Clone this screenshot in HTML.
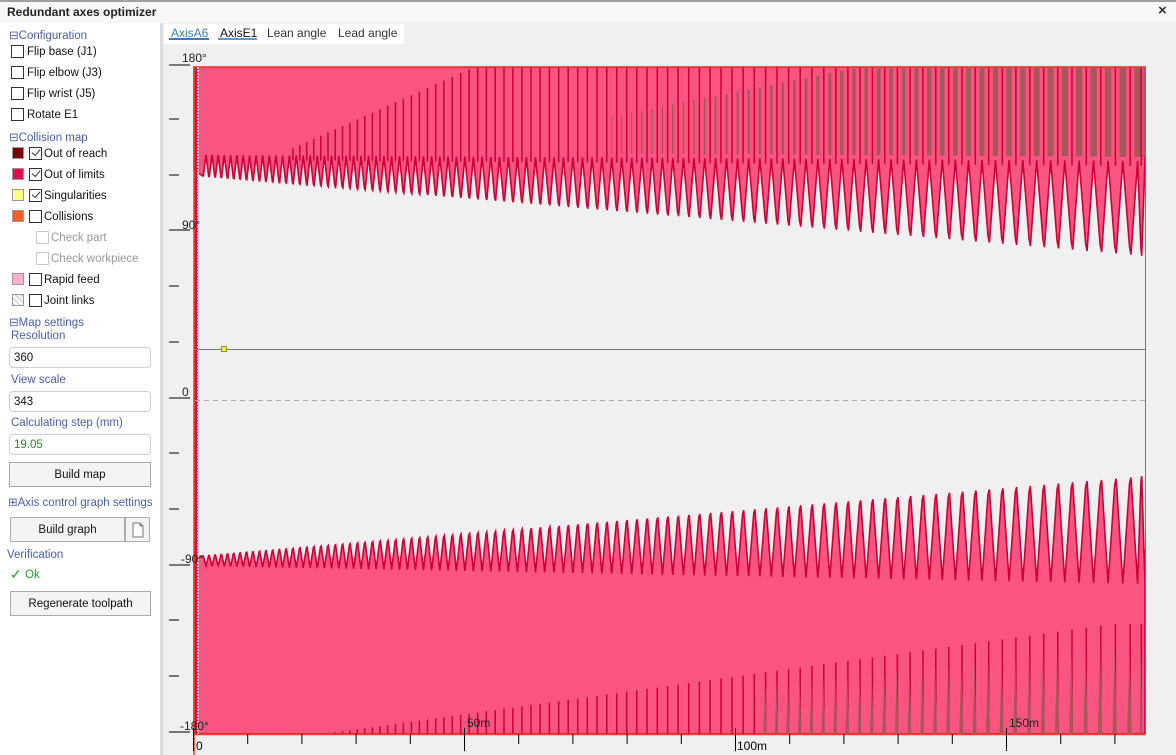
<!DOCTYPE html>
<html><head><meta charset="utf-8"><style>
*{margin:0;padding:0;box-sizing:border-box}
body{width:1176px;height:755px;overflow:hidden;background:#f0f0f0;font-family:"Liberation Sans",sans-serif;font-size:11.5px;color:#111;position:relative}
.a{position:absolute;white-space:nowrap}
.hdr{color:#4a5ea8}
.cb{position:absolute;width:13px;height:13px;border:1px solid #333;background:#fff}
.cb.g{border-color:#c8c8c8}
.sw{position:absolute;width:12px;height:12px;border:1px solid #999}
.inp{position:absolute;left:9px;width:142px;height:21px;border:1px solid #cfcfcf;border-radius:4px;background:#fff;padding:4px 0 0 4px}
.btn{position:absolute;border:1px solid #aaa;background:#f4f4f4;text-align:center;padding-top:6px}
.chk{position:absolute;left:2px;top:1px;width:8px;height:5px;border-left:1px solid #333;border-bottom:1px solid #333;transform:rotate(-50deg)}
</style></head><body>
<div class="a" style="left:0;top:0;width:1176px;height:23px;background:#f7f7f7;border-top:2px solid #a0a0a0"></div>
<div class="a" style="left:7px;top:5px;font-weight:bold;font-size:12px;color:#222">Redundant axes optimizer</div>
<div class="a" style="left:1158px;top:2px;font-size:15px;font-weight:bold;color:#333">×</div>
<div class="a" style="left:0;top:23px;width:160px;height:732px;background:#fff"></div>
<div class="a" style="left:160px;top:23px;width:3px;height:732px;background:#dcdcdc"></div>

<div class="a hdr" style="left:9px;top:28px">⊟Configuration</div>
<div class="cb" style="left:11px;top:45px"></div><div class="a" style="left:27px;top:46px">Flip base (J1)</div>
<div class="cb" style="left:11px;top:66px"></div><div class="a" style="left:27px;top:67px">Flip elbow (J3)</div>
<div class="cb" style="left:11px;top:87px"></div><div class="a" style="left:27px;top:88px">Flip wrist (J5)</div>
<div class="cb" style="left:11px;top:108px"></div><div class="a" style="left:27px;top:109px">Rotate E1</div>
<div class="a hdr" style="left:9px;top:130px">⊟Collision map</div>
<div class="sw" style="left:12px;top:147px;background:#7a0000"></div><div class="cb" style="left:29px;top:147px"><div class="chk"></div></div><div class="a" style="left:44px;top:148px">Out of reach</div>
<div class="sw" style="left:12px;top:168px;background:#e0104a"></div><div class="cb" style="left:29px;top:168px"><div class="chk"></div></div><div class="a" style="left:44px;top:169px">Out of limits</div>
<div class="sw" style="left:12px;top:189px;background:#ffff80"></div><div class="cb" style="left:29px;top:189px"><div class="chk"></div></div><div class="a" style="left:44px;top:190px">Singularities</div>
<div class="sw" style="left:12px;top:210px;background:#ff5a2a"></div><div class="cb" style="left:29px;top:210px"></div><div class="a" style="left:44px;top:211px">Collisions</div>
<div class="cb g" style="left:36px;top:231px"></div><div class="a" style="left:51px;top:232px;color:#999">Check part</div>
<div class="cb g" style="left:36px;top:252px"></div><div class="a" style="left:51px;top:253px;color:#999">Check workpiece</div>
<div class="sw" style="left:12px;top:273px;background:#ffb0c8"></div><div class="cb" style="left:29px;top:273px"></div><div class="a" style="left:44px;top:274px">Rapid feed</div>
<div class="sw" style="left:12px;top:294px;background:repeating-linear-gradient(45deg,#ddd 0 2px,#fff 2px 4px)"></div><div class="cb" style="left:29px;top:294px"></div><div class="a" style="left:44px;top:295px">Joint links</div>
<div class="a hdr" style="left:9px;top:315px">⊟Map settings</div>
<div class="a hdr" style="left:11px;top:330px">Resolution</div>
<div class="inp" style="top:347px">360</div>
<div class="a hdr" style="left:11px;top:374px">View scale</div>
<div class="inp" style="top:391px">343</div>
<div class="a hdr" style="left:11px;top:417px">Calculating step (mm)</div>
<div class="inp" style="top:434px;color:#2a8a2a">19.05</div>
<div class="btn" style="left:9px;top:462px;width:142px;height:25px">Build map</div>
<div class="a hdr" style="left:8px;top:495px">⊞Axis control graph settings</div>
<div class="btn" style="left:10px;top:517px;width:115px;height:25px">Build graph</div>
<div class="btn" style="left:125px;top:517px;width:25px;height:25px;padding-top:4px"><svg width="12" height="16"><path d="M1 1H8L11 4V15H1Z M8 1V4H11" fill="#fff" stroke="#777"/></svg></div>
<div class="a hdr" style="left:7px;top:549px">Verification</div>
<div class="a" style="left:10px;top:566px;color:#2a9a2a;font-size:14px">✓</div><div class="a" style="left:25px;top:569px;color:#2a9a2a">Ok</div>
<div class="btn" style="left:10px;top:591px;width:141px;height:25px">Regenerate toolpath</div>

<div class="a" style="left:164px;top:24px;width:240px;height:20px;background:#fff"></div>
<div class="a" style="left:171px;top:26px;font-size:12px;color:#3a7ac0">AxisA6</div>
<div class="a" style="left:169px;top:38px;width:40px;height:2px;background:#3a7ac0"></div>
<div class="a" style="left:220px;top:26px;font-size:12px">AxisE1</div>
<div class="a" style="left:218px;top:38px;width:39px;height:2px;background:#5a9ad0"></div>
<div class="a" style="left:267px;top:26px;font-size:12px;color:#333">Lean angle</div>
<div class="a" style="left:338px;top:26px;font-size:12px;color:#333">Lead angle</div>

<svg id="ch" class="a" style="left:0;top:0" width="1176" height="755"></svg>
<script>
(function(){
var s='';
var P='#fa5580',R='#cc0033',B='#a8565a';
var tpa='M194 67L1145 67L1145 160',bta='M194 734L1145 734L1145 550';
var xs=[];var x=200;while(x<1140){xs.push(x);x+=6+9*(x-200)/940;}
var tp='',bp='',dk='',br='',bs='',bsr='';
for(var i=xs.length-1;i>=0;i--){var x0=xs[i],p=(i+1<xs.length?xs[i+1]:1145)-x0,f=(x0-200)/940;
 var yb=155+6*f,yt=176+80*f;
 tp+='L'+(x0+p).toFixed(1)+' '+yb.toFixed(1)+'L'+(x0+0.55*p).toFixed(1)+' '+yt.toFixed(1)+'L'+(x0+0.45*p).toFixed(1)+' '+(yt-8*f).toFixed(1);
 var byb=566+18*f,byt=556-80*f;
 bp+='L'+(x0+p).toFixed(1)+' '+byb.toFixed(1)+'L'+(x0+0.55*p).toFixed(1)+' '+byt.toFixed(1)+'L'+(x0+0.45*p).toFixed(1)+' '+(byt+6*f).toFixed(1);
 if(x0>285){var ys=x0>470?67:67+(470-x0)*0.45;dk+='M'+(x0+0.5*p).toFixed(1)+' '+ys.toFixed(1)+'V'+(yb+5).toFixed(1);}
 if(x0>600){var w=Math.min(0.45,0.1+(x0-600)/1300)*p;var y0=x0>850?67:67+(850-x0)*0.2;br+='<rect x="'+(x0+p-w/2).toFixed(1)+'" y="'+y0.toFixed(1)+'" width="'+w.toFixed(1)+'" height="'+(yb-y0-4).toFixed(1)+'" fill="'+B+'"/>';}
 if(x0>320){var h=Math.min(110,(x0-320)*0.14);var c=x0+0.5*p;
   bsr+='M'+c.toFixed(1)+' 734V'+(734-h).toFixed(1);
   if(x0>750){var hb=h*0.8;bs+='M'+(c-0.2*p).toFixed(1)+' 734L'+(c-0.05*p).toFixed(1)+' '+(734-hb).toFixed(1)+'L'+(c+0.1*p).toFixed(1)+' 734Z';}}
}
s+='<path d="'+tpa+tp+'L194 170Z" fill="'+P+'" stroke="'+R+'" stroke-width="1.6"/>';
s+='<path d="'+bta+bp+'L194 560Z" fill="'+P+'" stroke="'+R+'" stroke-width="1.6"/>';
s+=br;
s+='<path d="'+dk+'" stroke="'+R+'" stroke-width="1.5" fill="none"/>';
s+='<path d="'+bsr+'" stroke="'+R+'" stroke-width="1.5" fill="none"/>';
s+='<path d="'+bs+'" fill="'+B+'"/>';
s+='<rect x="194" y="67" width="4" height="667" fill="#d8104a"/>';
s+='<rect x="1146" y="60" width="30" height="680" fill="#f0f0f0"/>';
s+='<line x1="1145.5" y1="67" x2="1145.5" y2="734" stroke="#777"/>';
s+='<line x1="194" y1="67" x2="1145" y2="67" stroke="#ff4010"/><line x1="194" y1="734.5" x2="1145" y2="734.5" stroke="#ff4010" stroke-width="1.5"/>';
s+='<line x1="194" y1="67" x2="194" y2="755" stroke="#ff4010" stroke-width="1.5"/>';
s+='<line x1="198" y1="67" x2="198" y2="734" stroke="#ccc" stroke-width="2" stroke-dasharray="2 1"/>';
s+='<line x1="195" y1="349.5" x2="1145" y2="349.5" stroke="#777"/>';
s+='<line x1="195" y1="400.5" x2="1145" y2="400.5" stroke="#aaa" stroke-dasharray="5 4"/>';
s+='<rect x="221.5" y="346.5" width="5" height="5" fill="#ff0" stroke="#886"/>';
var ty=[67,121,177,232,288,344,400,455,511,567,622,678,734];
for(var j=0;j<ty.length;j++){var maj=j%3==0;s+='<line x1="169" y1="'+(ty[j]-2)+'" x2="'+(maj?190:179)+'" y2="'+(ty[j]-2)+'" stroke="#000"/>';}
var lb=[['180°',182,62],['90°',182,229],['0',182,396],['-90°',181,563],['-180°',180,730]];
lb.forEach(function(l){s+='<text x="'+l[1]+'" y="'+l[2]+'" font-family="Liberation Sans,sans-serif" font-size="12" fill="#222">'+l[0]+'</text>';});
for(var k=0;k<18;k++){var tx=193.5+k*54.2;var mj=(k%5==0);s+='<line x1="'+tx.toFixed(1)+'" y1="'+(mj?728:734)+'" x2="'+tx.toFixed(1)+'" y2="'+(mj?751:744)+'" stroke="#000"/>';}
s+='<text x="196" y="750" font-family="Liberation Sans,sans-serif" font-size="12">0</text>';
s+='<text x="467" y="727" font-family="Liberation Sans,sans-serif" font-size="12" fill="#222">50m</text>';
s+='<text x="737" y="750" font-family="Liberation Sans,sans-serif" font-size="12">100m</text>';
s+='<text x="1009" y="727" font-family="Liberation Sans,sans-serif" font-size="12" fill="#222">150m</text>';
document.getElementById('ch').innerHTML=s;
})();
</script>
</body></html>
